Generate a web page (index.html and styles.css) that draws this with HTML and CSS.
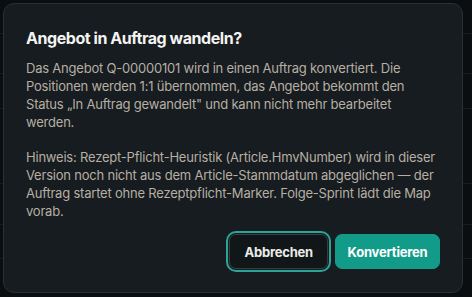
FILE: index.html
```html
<!DOCTYPE html>
<html lang="de">
<head>
<meta charset="utf-8">
<link rel="stylesheet" href="styles.css">
<title>Angebot in Auftrag wandeln?</title>
</head>
<body>
<div class="backdrop">
  <div class="row r1"></div>
  <div class="row r2"></div>
  <div class="row r3"></div>
  <div class="row r4"></div>
  <div class="row r5"></div>
  <div class="row r6"></div>
</div>
<div class="dialog" role="dialog">
  <h2 class="title">Angebot in Auftrag wandeln?</h2>
  <p class="text">Das Angebot Q-00000101 wird in einen Auftrag konvertiert. Die Positionen werden 1:1 übernommen, das Angebot bekommt den Status „In Auftrag gewandelt" und kann nicht mehr bearbeitet werden.</p>
  <p class="text hint">Hinweis: Rezept-Pflicht-Heuristik (Article.HmvNumber) wird in dieser Version noch nicht aus dem Article-Stammdatum abgeglichen — der Auftrag startet ohne Rezeptpflicht-Marker. Folge-Sprint lädt die Map vorab.</p>
  <div class="actions">
    <button class="btn cancel">Abbrechen</button>
    <button class="btn primary">Konvertieren</button>
  </div>
</div>
</body>
</html>
```
FILE: styles.css
```css
* { box-sizing: border-box; }
html, body { margin: 0; padding: 0; }
body {
  width: 472px;
  height: 297px;
  background: #0b0e10;
  font-family: Inter, "Noto Sans", sans-serif;
  overflow: hidden;
  position: relative;
}
.backdrop { display: flex; flex-direction: column; }
.row { border-bottom: 1px solid #171c1f; }
.r1 { height: 34px; }
.r2 { height: 40px; }
.r3 { height: 35px; }
.r4 { height: 75px; }
.r5 { height: 41px; }
.r6 { height: 34px; }
.dialog {
  position: absolute;
  top: 3px;
  left: 3px;
  width: 460px;
  height: 290px;
  background: #161c1f;
  border: 1px solid #2a3135;
  border-radius: 11px;
  padding: 22px 22px 23px 22px;
  display: flex;
  flex-direction: column;
}
.title {
  margin: 0;
  font-size: 16px;
  line-height: 24px;
  font-weight: 700;
  color: #f3f3f2;
  letter-spacing: -0.45px;
}
.text {
  margin: 9px 0 0;
  font-size: 13px;
  line-height: 18px;
  color: #b7afa4;
  letter-spacing: -0.21px;
}
.hint { margin-top: 17px; }
.actions {
  margin-top: auto;
  display: flex;
  justify-content: flex-end;
  gap: 7px;
}
.btn {
  height: 35px;
  border-radius: 7px;
  font-family: Inter, "Noto Sans", sans-serif;
  font-size: 13px;
  font-weight: 700;
  letter-spacing: -0.2px;
  cursor: pointer;
}
.cancel {
  padding: 0 14px;
  background: #111619;
  color: #ecebe8;
  border: 1px solid #363e42;
  outline: 2px solid #2ba597;
  outline-offset: 1px;
}
.primary {
  padding: 0 11.5px;
  background: #129b89;
  color: #ffffff;
  border: 1px solid #129b89;
}
```
